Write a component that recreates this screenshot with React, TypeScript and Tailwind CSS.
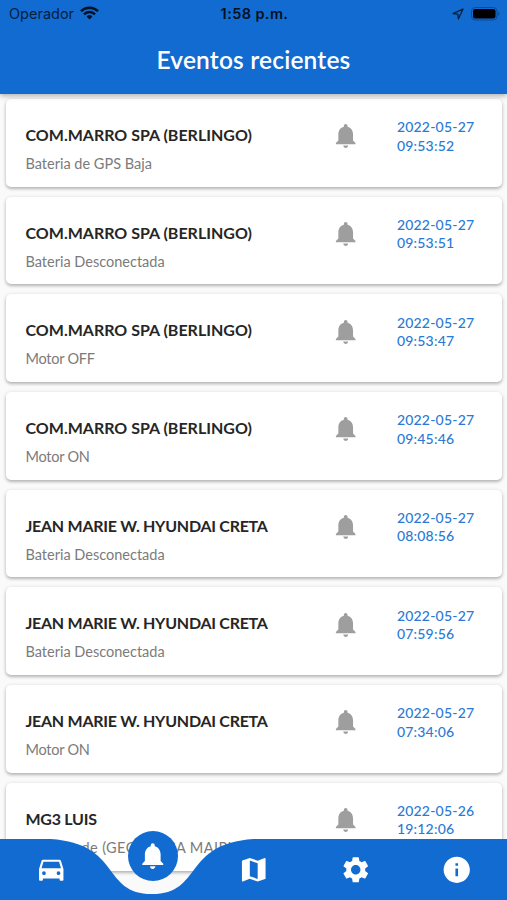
import type { ComponentType } from "react";
import { MdInfo, MdMap, MdNotifications, MdSettings } from "react-icons/md";

type EventItem = { vehicle: string; detail: string; date: string; time: string; titleClass?: string; detailClass?: string };

const jean = "tracking-[-0.27px]";
const motor = "tracking-[-0.25px]";

const events: EventItem[] = [
  { vehicle: "COM.MARRO SPA (BERLINGO)", detail: "Bateria de GPS Baja", date: "2022-05-27", time: "09:53:52" },
  { vehicle: "COM.MARRO SPA (BERLINGO)", detail: "Bateria Desconectada", date: "2022-05-27", time: "09:53:51" },
  { vehicle: "COM.MARRO SPA (BERLINGO)", detail: "Motor OFF", date: "2022-05-27", time: "09:53:47", detailClass: motor },
  { vehicle: "COM.MARRO SPA (BERLINGO)", detail: "Motor ON", date: "2022-05-27", time: "09:45:46", detailClass: motor },
  { vehicle: "JEAN MARIE W. HYUNDAI CRETA", detail: "Bateria Desconectada", date: "2022-05-27", time: "08:08:56", titleClass: jean },
  { vehicle: "JEAN MARIE W. HYUNDAI CRETA", detail: "Bateria Desconectada", date: "2022-05-27", time: "07:59:56", titleClass: jean },
  { vehicle: "JEAN MARIE W. HYUNDAI CRETA", detail: "Motor ON", date: "2022-05-27", time: "07:34:06", titleClass: jean, detailClass: motor },
  { vehicle: "MG3 LUIS", detail: "Entrada de (GEOCERCA MAIPU)", date: "2022-05-26", time: "19:12:06", titleClass: jean, detailClass: "tracking-[0.4px]" },
];

function StatusBar() {
  return (
    <div className="grid h-7 grid-cols-3 items-center pl-[9px] pr-[7px] font-['Inter',sans-serif] text-[14.5px] leading-7 text-[#06203f]">
      <div className="flex items-center gap-[6px]">
        <span>Operador</span>
        <svg className="-mt-[2px]" width="19" height="14" viewBox="0 0 19 14" fill="none" stroke="#03101f" strokeWidth="2.5">
          <path d="M1 5.1a12.2 12.2 0 0 1 17 0" />
          <path d="M4 8.3a7.8 7.8 0 0 1 11 0" />
          <path d="M9.5 13.4 6.6 10.5a4.1 4.1 0 0 1 5.8 0Z" fill="#03101f" stroke="none" />
        </svg>
      </div>
      <span className="text-center text-[14.5px] font-semibold tracking-[0.4px] text-[#03101f]">1:58 p.m.</span>
      <div className="-mt-px flex items-center justify-end gap-[7px]">
        <svg width="12" height="12" viewBox="0 0 12 12" fill="none" stroke="#06203f" strokeWidth="1.3" strokeLinejoin="round">
          <path d="M11 1 1 5.6l4.8.6.6 4.8Z" />
        </svg>
        <svg width="29" height="14" viewBox="0 0 29 14">
          <rect x="0.5" y="0.5" width="25.5" height="12.5" rx="3.8" fill="none" stroke="#0b4a93" />
          <rect x="2" y="2" width="22.5" height="9.5" rx="2.2" fill="#000" />
          <path d="M27.2 4.8c1.7.7 1.7 3.2 0 3.9Z" fill="#0b4a93" />
        </svg>
      </div>
    </div>
  );
}

function EventCard({ vehicle, detail, date, time, titleClass = "", detailClass = "" }: EventItem) {
  return (
    <article className="flex h-[87.7px] shrink-0 rounded-[5px] bg-white pl-[19.5px] shadow-[0_1px_4px_rgba(0,0,0,0.16),0_2px_3px_rgba(0,0,0,0.18)]">
      <div className="w-[305px] pt-[26px]">
        <h2 className={`whitespace-nowrap text-[16px] font-bold leading-5 text-[#262626] ${titleClass}`}>{vehicle}</h2>
        <p className={`mt-[9px] whitespace-nowrap text-[14.5px] leading-5 text-[#7b7b7b] ${detailClass}`}>{detail}</p>
      </div>
      <MdNotifications className="mt-[22.2px] size-[29.4px] text-[#9e9e9e]" />
      <div className="ml-[37px] pt-[19.2px] text-[14px] font-medium leading-[18.4px] tracking-[0.2px] text-[#2a7ad6]">
        <div>{date}</div>
        <div>{time}</div>
      </div>
    </article>
  );
}

/* Front view of a car: tall windshield, two round headlights, short wheels. */
function CarIcon({ className = "" }: { className?: string }) {
  return (
    <svg className={className} viewBox="0 0 32 32" fill="currentColor">
      <path
        fillRule="evenodd"
        d="M8.3 5.8H24.7Q26 5.8 26.4 7L28.9 15.2V26.2Q28.9 27.2 27.9 27.2H26Q25 27.2 25 26.2V24.8H8V26.2Q8 27.2 7 27.2H5.1Q4.1 27.2 4.1 26.2V15.2L6.6 7Q7 5.8 8.3 5.8ZM8.6 7.8L6.6 14.6H26.4L24.4 7.8ZM9.1 17.6A1.9 1.9 0 1 0 9.1 21.4A1.9 1.9 0 1 0 9.1 17.6ZM23.9 17.6A1.9 1.9 0 1 0 23.9 21.4A1.9 1.9 0 1 0 23.9 17.6Z"
      />
    </svg>
  );
}

const navItems: { label: string; Icon: ComponentType<{ className?: string }> }[] = [
  { label: "Vehículos", Icon: CarIcon },
  { label: "Eventos", Icon: MdNotifications },
  { label: "Mapa", Icon: MdMap },
  { label: "Ajustes", Icon: MdSettings },
  { label: "Información", Icon: MdInfo },
];

function BottomNav() {
  return (
    <nav className="absolute inset-x-0 bottom-0 h-[69px]">
      <svg className="absolute inset-x-0 bottom-0" width="507" height="61" viewBox="0 0 507 61">
        <path
          d="M0 0H50.7C121.7 4.6 101.4 55.1 152.1 55.1C202.8 55.1 182.5 4.6 253.5 0H507V61H0Z"
          fill="#126bd0"
        />
      </svg>
      <div className="relative grid h-full grid-cols-5">
        {navItems.map(({ label, Icon }, i) => (
          <button key={label} aria-label={label} className="flex items-start justify-center text-white">
            {i === 1 ? (
              <span className="ml-px flex size-[50px] items-center justify-center rounded-full bg-[#126bd0]">
                <Icon className="size-[31.5px]" />
              </span>
            ) : (
              <Icon className="mt-[23px] ml-px size-[31.5px]" />
            )}
          </button>
        ))}
      </div>
    </nav>
  );
}

export default function App() {
  return (
    <main className="relative flex h-[900px] w-[507px] flex-col overflow-hidden bg-[#fafafa] font-['Lato',sans-serif]">
      <header className="relative z-10 h-[94px] shrink-0 bg-[#126bd0] shadow-[0_2px_5px_rgba(0,0,0,0.3)]">
        <StatusBar />
        <h1 className="mt-4 text-center text-[24.5px] font-semibold leading-8 tracking-[0.18px] text-white">Eventos recientes</h1>
      </header>
      <section className="flex flex-col gap-[10px] pl-[6px] pr-[5px] pt-[5px]">
        {events.map((event) => (
          <EventCard key={event.date + event.time} {...event} />
        ))}
      </section>
      <BottomNav />
    </main>
  );
}
